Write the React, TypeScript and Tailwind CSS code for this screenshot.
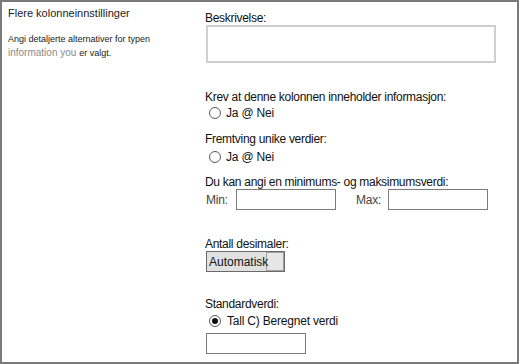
import React from "react";

function Radio({ checked = false }: { checked?: boolean }) {
  return (
    <span className="flex h-[12px] w-[12px] items-center justify-center rounded-full border border-[#595959] bg-white">
      {checked && <span className="h-[6px] w-[6px] rounded-full bg-[#111]" />}
    </span>
  );
}

function Label({ children, className = "" }: { children: React.ReactNode; className?: string }) {
  return (
    <div className={`text-[12px] leading-[14px] tracking-[-0.3px] text-[#111] ${className}`}>{children}</div>
  );
}

export default function App() {
  return (
    <div
      className="flex h-[364px] w-[519px] border-2 border-[#7a7a7a] bg-white"
      style={{ fontFamily: '"Liberation Sans", Arial, sans-serif' }}
    >
      {/* left column */}
      <div className="w-[203px] shrink-0 pl-[6px]">
        <div className="mt-[5px] text-[11px] leading-[13px] text-[#222]">Flere kolonneinnstillinger</div>
        <div className="mt-[13px] text-[9px] leading-[13px] text-[#222]">
          Angi detaljerte alternativer for typen
          <br />
          <span className="text-[10px] text-[#8a8a8a]">information you </span>er valgt.
        </div>
      </div>

      {/* right column */}
      <div className="flex flex-col">
        <Label className="mt-[9px]">Beskrivelse:</Label>
        <div className="ml-px h-[38px] w-[290px] border-2 border-[#cfcfcf]" />

        <Label className="mt-[27px]">Krev at denne kolonnen inneholder informasjon:</Label>
        <div className="mt-px flex h-[16px] items-center gap-[5px] pl-[4px] text-[12px] tracking-[-0.2px] text-[#111]">
          <Radio />
          <span>Ja @ Nei</span>
        </div>

        <Label className="mt-[11px]">Fremtving unike verdier:</Label>
        <div className="mt-[3px] flex h-[16px] items-center gap-[5px] pl-[4px] text-[12px] tracking-[-0.2px] text-[#111]">
          <Radio />
          <span>Ja @ Nei</span>
        </div>

        <Label className="mt-[10px] leading-[13px]">Du kan angi en minimums- og maksimumsverdi:</Label>
        <div className="flex h-[21px] items-center text-[12px] tracking-[-0.2px] text-[#444]">
          <span className="w-[31px] pl-px">Min:</span>
          <div className="h-[21px] w-[100px] border border-[#7a7a7a]" />
          <span className="ml-[20px] w-[32px]">Max:</span>
          <div className="h-[21px] w-[100px] border border-[#7a7a7a]" />
        </div>

        <Label className="mt-[27px]">Antall desimaler:</Label>
        <div className="relative ml-px h-[21px] w-[79px] border border-[#6a6a6a] bg-[#e1e1e1]">
          <div className="absolute right-0 top-0 h-full w-[18px] border border-[#a0a0a0] bg-[#e6e6e6]" />
          <span className="absolute left-[2px] top-[3px] text-[12px] leading-[14px] text-[#111]">Automatisk</span>
        </div>

        <Label className="mt-[25px]">Standardverdi:</Label>
        <div className="mt-[2px] flex h-[16px] items-center gap-[6px] pl-[4px] text-[12px] tracking-[-0.2px] text-[#111]">
          <Radio checked />
          <span>Tall C) Beregnet verdi</span>
        </div>
        <div className="ml-px mt-[4px] h-[21px] w-[100px] border border-[#7a7a7a]" />
      </div>
    </div>
  );
}
